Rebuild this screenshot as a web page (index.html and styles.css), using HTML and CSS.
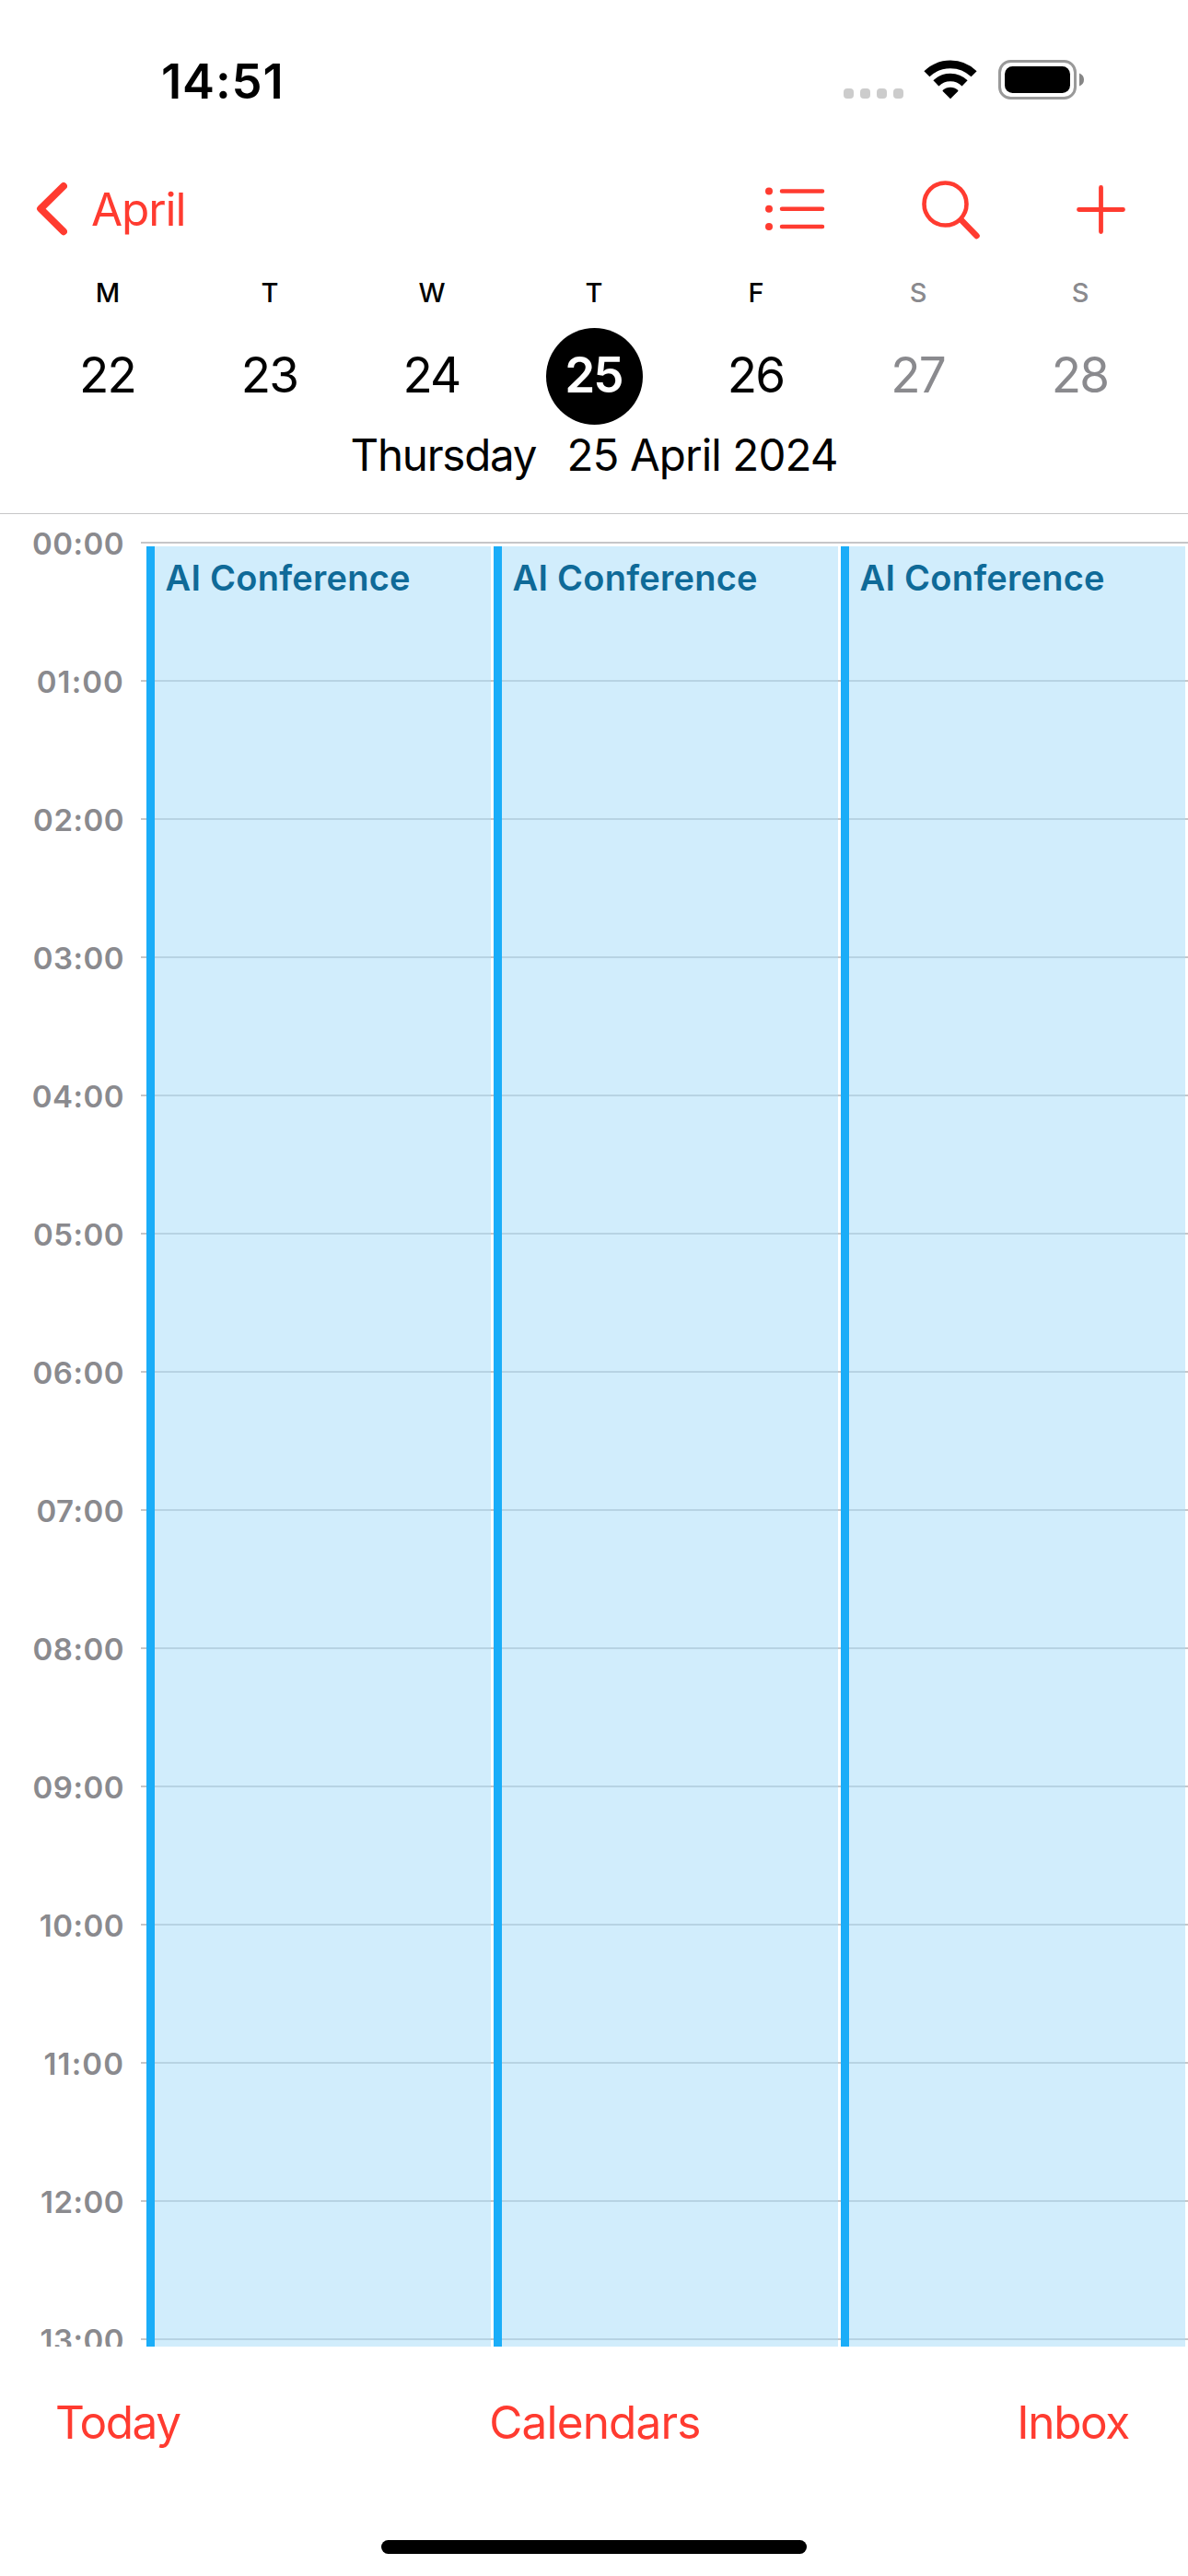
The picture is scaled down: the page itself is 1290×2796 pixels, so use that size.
FILE: index.html
```
<!DOCTYPE html>
<html lang="en">
<head>
<meta charset="utf-8">
<title>Calendar</title>
<link rel="stylesheet" href="styles.css">
</head>
<body>
<div class="screen">
  <header class="header">
    <div class="status">
      <span class="clock">14:51</span>
      <div class="indicators">
        <div class="cellular"><i></i><i></i><i></i><i></i></div>
        <svg class="wifi" width="58" height="43" viewBox="0 0 58 43">
          <g fill="none" stroke="#000" stroke-width="8.6">
            <path d="M3.4 15.3A36.6 36.6 0 0 1 54.6 15.3"/>
            <path d="M13.4 25.4A22.2 22.2 0 0 1 44.6 25.4"/>
          </g>
          <path d="M29 42.2 20.7 33.9Q20.3 33.3 20.9 32.8A12 12 0 0 1 37.1 32.8Q37.7 33.3 37.3 33.9Z"/>
        </svg>
        <svg class="battery" width="94" height="43" viewBox="0 0 94 43">
          <rect x="1.5" y="1.5" width="82" height="40" rx="12" fill="none" stroke="#999" stroke-width="3"/>
          <rect x="7" y="7" width="71" height="29" rx="8.5"/>
          <path d="M88 14.5Q93 16.5 93 21.5 93 26.5 88 28.5Z" fill="#868686"/>
        </svg>
      </div>
    </div>
    <nav class="nav">
      <a class="back">
        <svg width="34" height="58" viewBox="0 0 34 58"><path d="M30 4 5 28.600 30 53.300" fill="none" stroke="currentColor" stroke-width="7.800" stroke-linecap="round" stroke-linejoin="round"/></svg>
        <span>April</span>
      </a>
      <div class="actions">
        <svg width="65" height="48" viewBox="0 0 65 48">
          <g fill="currentColor"><circle cx="4" cy="4.500" r="4"/><circle cx="4" cy="23.700" r="4"/><circle cx="4" cy="43" r="4"/></g>
          <path d="M18 4.500H62M18 23.700H62M18 43H62" stroke="currentColor" stroke-width="4.500" stroke-linecap="round"/>
        </svg>
        <svg width="64" height="64" viewBox="0 0 64 64" fill="none" stroke="currentColor" stroke-linecap="round">
          <circle cx="25.500" cy="25.500" r="23" stroke-width="4.600"/>
          <path d="M43 43 59.500 60" stroke-width="6.500"/>
        </svg>
        <svg width="53" height="53" viewBox="0 0 53 53"><path d="M26.500 2.500V50.500M2.500 26.500H50.500" stroke="currentColor" stroke-width="4.800" stroke-linecap="round"/></svg>
      </div>
    </nav>
    <div class="week">
      <div class="day"><span class="letter">M</span><span class="date">22</span></div>
      <div class="day"><span class="letter">T</span><span class="date">23</span></div>
      <div class="day"><span class="letter">W</span><span class="date">24</span></div>
      <div class="day selected"><span class="letter">T</span><span class="date">25</span></div>
      <div class="day"><span class="letter">F</span><span class="date">26</span></div>
      <div class="day weekend"><span class="letter">S</span><span class="date">27</span></div>
      <div class="day weekend"><span class="letter">S</span><span class="date">28</span></div>
    </div>
    <div class="title"><span class="weekday">Thursday</span><span class="full-date">25 April 2024</span></div>
  </header>
  <main class="schedule">
    <div class="hour"><time>00:00</time><hr></div>
    <div class="hour loose"><time>01:00</time><hr></div>
    <div class="hour"><time>02:00</time><hr></div>
    <div class="hour"><time>03:00</time><hr></div>
    <div class="hour"><time>04:00</time><hr></div>
    <div class="hour"><time>05:00</time><hr></div>
    <div class="hour"><time>06:00</time><hr></div>
    <div class="hour"><time>07:00</time><hr></div>
    <div class="hour"><time>08:00</time><hr></div>
    <div class="hour"><time>09:00</time><hr></div>
    <div class="hour"><time>10:00</time><hr></div>
    <div class="hour loose"><time>11:00</time><hr></div>
    <div class="hour"><time>12:00</time><hr></div>
    <div class="hour"><time>13:00</time><hr></div>
    <div class="events">
      <div class="event">AI Conference</div>
      <div class="event">AI Conference</div>
      <div class="event">AI Conference</div>
    </div>
  </main>
  <footer class="toolbar">
    <div class="links"><a class="today">Today</a><a class="calendars">Calendars</a><a class="inbox">Inbox</a></div>
    <div class="home-bar"></div>
  </footer>
</div>
</body>
</html>
```
FILE: styles.css
```
* { box-sizing: border-box; }
body { margin: 0; background: #fff; color: #000; font-family: Inter, "Liberation Sans", sans-serif; }
svg { display: block; flex: none; }

.screen { width: 1290px; height: 2796px; display: flex; flex-direction: column; overflow: hidden; }

.header { height: 558px; flex: none; border-bottom: 1px solid #c6c6c8; }

.status { height: 176px; padding: 0 112px 0 175px; display: flex; justify-content: space-between; align-items: center; }
.clock { font-size: 52.5px; font-weight: 600; letter-spacing: 0.9px; line-height: 64px; }
.indicators { display: flex; align-items: flex-start; height: 46px; }
.cellular { display: flex; gap: 7px; margin: 31px 22px 0 0; }
.cellular i { width: 11px; height: 11px; border-radius: 4px; background: #ccc; }
.wifi { margin-right: 23px; }

.nav { height: 102px; padding: 0 68px 0 39px; display: flex; justify-content: space-between; align-items: center; color: #ff3b30; }
.back { display: flex; align-items: center; gap: 26px; font-size: 49.5px; letter-spacing: -1.1px; }
.actions { display: flex; align-items: center; }
.actions svg:nth-child(1) { margin-right: 105px; }
.actions svg:nth-child(2) { margin: 1px 104px 0 0; }

.week { display: grid; grid-template-columns: repeat(7, 176px); justify-content: center; height: 183px; }
.day { display: flex; flex-direction: column; align-items: center; }
.letter { height: 78px; line-height: 79px; font-size: 29px; font-weight: 550; }
.date { width: 105px; height: 105px; border-radius: 50%; line-height: 103px; text-align: center; font-size: 53px; letter-spacing: -1.8px; text-indent: -1px; }
.selected .date { background: #000; color: #fff; font-weight: 600; letter-spacing: -2px; }
.weekend { color: #8a8a8e; }

.title { display: flex; justify-content: center; gap: 33px; line-height: 66px; font-size: 47.5px; }
.weekday { letter-spacing: -1.2px; }
.full-date { letter-spacing: -0.9px; }

.schedule { position: relative; height: 1989px; flex: none; overflow: hidden; padding-top: 30px; }
.hour { height: 150px; display: flex; align-items: flex-start; }
.hour time { width: 135px; margin-top: -18px; text-align: right; font-size: 33px; line-height: 40px; font-weight: 600; letter-spacing: 0.5px; color: #8a8a8e; }
.loose time { letter-spacing: 1.1px; }
.hour hr { flex: 1; height: 2px; margin: 0 0 0 18px; border: 0; background: #c6c6c8; }

/* All-day columns sit on top of the hour lines, which show through */
.events { position: absolute; top: 35px; right: 3px; bottom: 0; left: 159px; display: grid; grid-template-columns: repeat(3, 1fr); gap: 3px; }
.event { padding: 11px 0 0 11.5px; background: rgba(171, 222, 250, 0.55); background-clip: padding-box; border-left: 9px solid #1badf8; color: #0f6a98; font-size: 38px; line-height: 46px; font-weight: 600; letter-spacing: 0.25px; white-space: nowrap; }

.toolbar { flex: 1; display: flex; flex-direction: column; align-items: center; justify-content: space-between; padding-bottom: 24px; }
.links { width: 100%; padding: 52px 64px 0 60px; display: flex; justify-content: space-between; font-size: 49.5px; line-height: 60px; color: #ff3b30; }
.today { letter-spacing: -1.5px; }
.calendars { letter-spacing: -0.85px; margin-right: 8px; }
.inbox { letter-spacing: -1.35px; }
.home-bar { width: 462px; height: 15px; border-radius: 8px; background: #000; }
```
